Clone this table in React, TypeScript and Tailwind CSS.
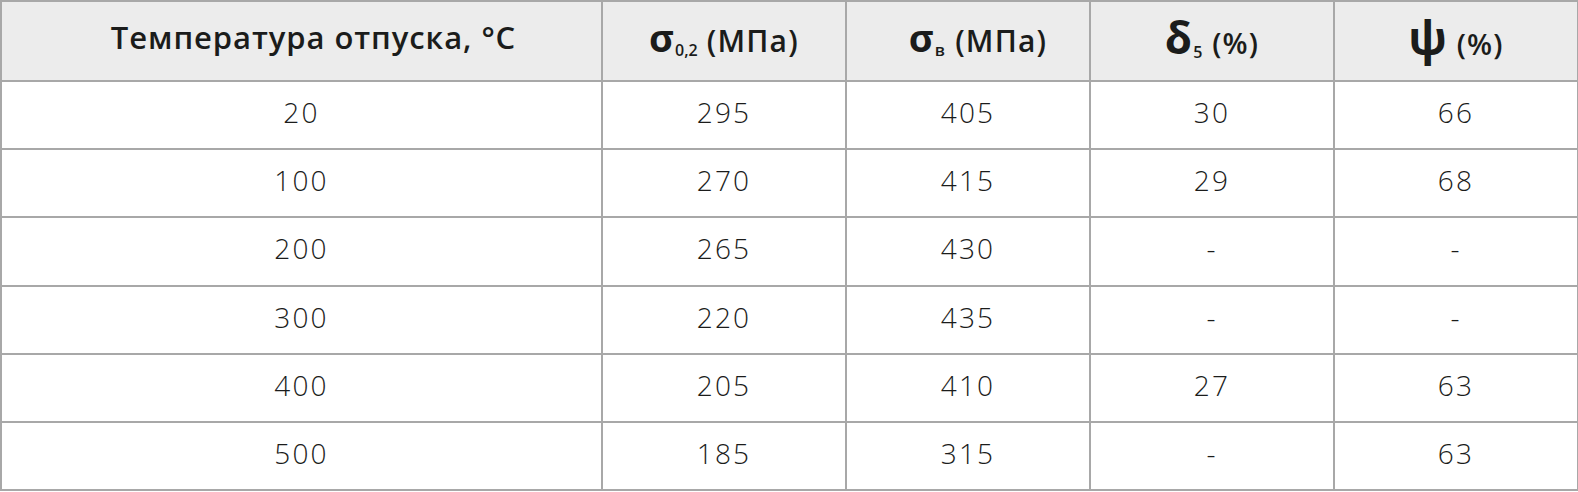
const rows: string[][] = [
  ['20', '295', '405', '30', '66'],
  ['100', '270', '415', '29', '68'],
  ['200', '265', '430', '-', '-'],
  ['300', '220', '435', '-', '-'],
  ['400', '205', '410', '27', '63'],
  ['500', '185', '315', '-', '63']
]

const cell = 'border-2 border-[#a8a8a8] text-center align-middle p-0 leading-none'

export default function App() {
  return (
    <div className="w-[1578px] bg-white font-['Open_Sans',sans-serif] text-[#1b1c1b]">
      <table className="w-[1577px] table-fixed border-collapse">
        <colgroup>
          <col className="w-[601px]" />
          <col className="w-[244px]" />
          <col className="w-[244px]" />
          <col className="w-[244px]" />
          <col className="w-[244px]" />
        </colgroup>
        <thead>
          <tr className="h-[80px] bg-[#ececec]">
            <th className={cell + ' pl-6 pb-2 text-[31px] font-semibold tracking-[0.03em]'}>
              Температура отпуска, °C
            </th>
            <th className={cell + ' pb-2 text-[30px] font-semibold tracking-[0.04em]'}>
              <span className="text-[38px] font-bold">σ</span>
              <sub className="text-[16px] font-semibold tracking-normal">0,2</sub> (МПа)
            </th>
            <th className={cell + ' pl-5 pb-2 text-[30px] font-semibold tracking-[0.04em]'}>
              <span className="text-[38px] font-bold">σ</span>
              <sub className="text-[17px] font-semibold">в</sub> (МПа)
            </th>
            <th className={cell + ' pb-2 text-[29px] font-semibold tracking-[0.04em]'}>
              <span className="text-[44px] font-bold">δ</span>
              <sub className="text-[16px] font-semibold">5</sub> (%)
            </th>
            <th className={cell + ' pb-2 text-[29px] font-semibold tracking-[0.04em]'}>
              <span className="text-[46px] font-bold">ψ</span> (%)
            </th>
          </tr>
        </thead>
        <tbody>
          {rows.map((r, i) => (
            <tr key={i} className="h-[68.2px]">
              {r.map((v, j) => (
                <td key={j} className={cell + ' pb-[6px] text-[28px] font-light tracking-[0.08em]'}>
                  {v}
                </td>
              ))}
            </tr>
          ))}
        </tbody>
      </table>
    </div>
  )
}
